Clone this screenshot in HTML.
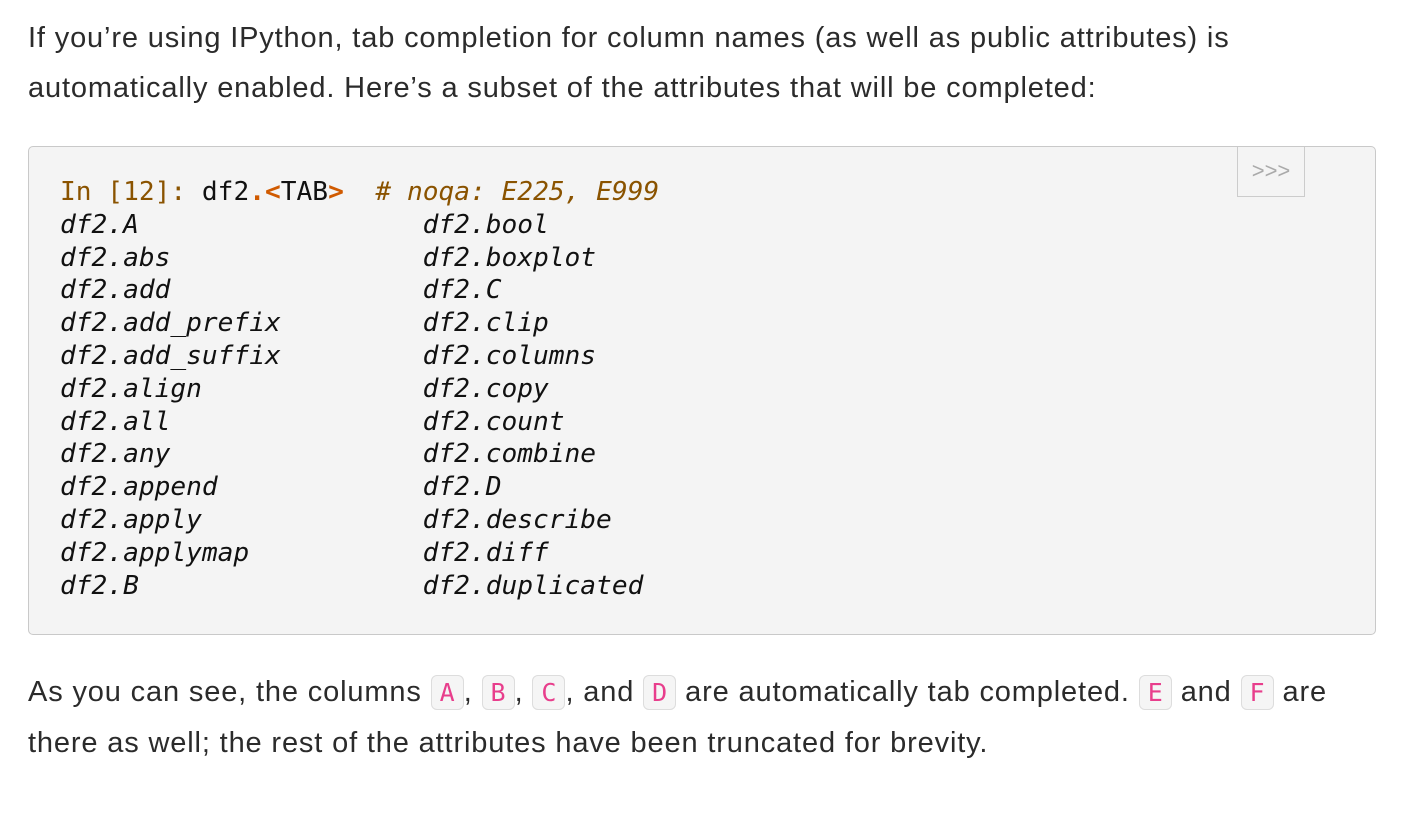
<!DOCTYPE html>
<html><head><meta charset="utf-8"><style>
body{margin:0;background:#fff;width:1420px;height:832px;overflow:hidden;font-family:"Liberation Sans",sans-serif;color:#2b2b2b}
p{margin:0;position:absolute;left:28px;font-size:29px;letter-spacing:0.85px;line-height:50px;width:1330px}
.box{position:absolute;left:28px;top:146px;width:1346px;height:487px;border:1px solid #c9c9c9;border-radius:5px;background:#f4f4f4}
pre{position:absolute;left:31px;top:29px;margin:0;font-family:"DejaVu Sans Mono",monospace;font-size:26.2px;line-height:32.8px;color:#111}
i{font-style:italic}
.c{color:#8a5300}.o{color:#d05a00;font-weight:bold}
.btn{position:absolute;left:1208px;top:0px;width:68px;height:50px;border:1px solid #ccc;box-sizing:border-box;color:#aaa;font-size:22px;text-align:center;line-height:48px;border-top:none}
code{font-family:"DejaVu Sans Mono",monospace;color:#e83e8c;background:#f5f5f5;border:1px solid #ddd;border-radius:6px;font-size:25px;letter-spacing:0;padding:2px 8px}
</style></head><body>
<p style="top:13px">If you’re using IPython, tab completion for column names (as well as public attributes) is automatically enabled. Here’s a subset of the attributes that will be completed:</p>
<div class="box"><div class="btn">&gt;&gt;&gt;</div>
<pre><span class="c">In [12]:</span> df2<span class="o">.&lt;</span>TAB<span class="o">&gt;</span>  <i class="c"># noqa: E225, E999</i>
<i>df2.A                  df2.bool
df2.abs                df2.boxplot
df2.add                df2.C
df2.add_prefix         df2.clip
df2.add_suffix         df2.columns
df2.align              df2.copy
df2.all                df2.count
df2.any                df2.combine
df2.append             df2.D
df2.apply              df2.describe
df2.applymap           df2.diff
df2.B                  df2.duplicated</i></pre></div>
<p style="top:667px">As you can see, the columns <code>A</code>, <code>B</code>, <code>C</code>, and <code>D</code> are automatically tab completed. <code>E</code> and <code>F</code> are there as well; the rest of the attributes have been truncated for brevity.</p>
</body></html>
